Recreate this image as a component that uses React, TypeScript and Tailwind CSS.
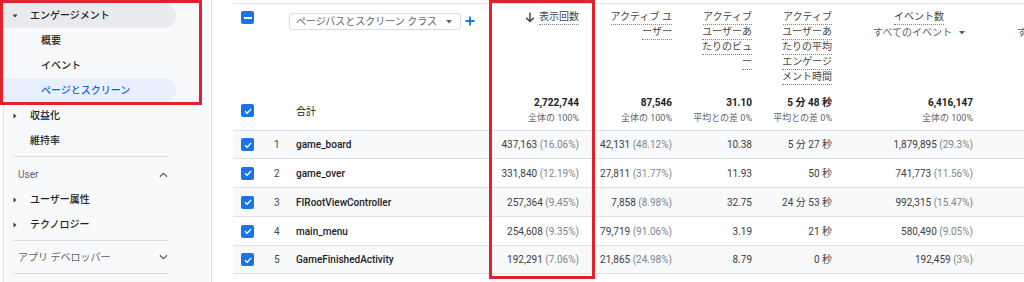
import React from "react";

const cols = "grid grid-cols-[31px_26px_199px_98px_93px_80px_80px_141px_60px]";

function Check({ mixed }: { mixed?: boolean }) {
  return (
    <span className="flex h-[13px] w-[13px] items-center justify-center rounded-[2px] bg-[#1a73e8]">
      {mixed ? (
        <span className="h-[2px] w-[8px] bg-white" />
      ) : (
        <svg viewBox="0 0 12 12" className="h-[10px] w-[10px]">
          <path d="M2.3 6.3 L4.9 8.7 L9.7 3.6" fill="none" stroke="white" strokeWidth="1.6" />
        </svg>
      )}
    </span>
  );
}

function Tri({ open }: { open?: boolean }) {
  return (
    <span className="flex w-[18px] items-center">
      <svg viewBox="0 0 6 6" className="h-[6px] w-[6px] fill-[#3c4043]">
        {open ? <path d="M0.5 1.5 L5.5 1.5 L3 4.5 Z" /> : <path d="M1.5 0.5 L4.5 3 L1.5 5.5 Z" />}
      </svg>
    </span>
  );
}

function Chevron({ up }: { up?: boolean }) {
  return (
    <svg viewBox="0 0 10 6" className="h-[6px] w-[9px]">
      <path d={up ? "M1 5 L5 1.2 L9 5" : "M1 1 L5 4.8 L9 1"} fill="none" stroke="#5f6368" strokeWidth="1.4" />
    </svg>
  );
}

function HeadLines({ lines }: { lines: string[] }) {
  return (
    <div className="flex flex-col items-end">
      {lines.map((l, i) => (
        <span key={i} className="whitespace-pre border-b border-dotted border-[#80868b] leading-[14px]">
          {l}
        </span>
      ))}
    </div>
  );
}

const totals = [
  { v: "2,722,744", s: "全体の 100%" },
  { v: "87,546", s: "全体の 100%" },
  { v: "31.10", s: "平均との差 0%" },
  { v: "5 分 48 秒", s: "平均との差 0%" },
];

const rows = [
  { n: "game_board", views: "437,163", vp: "16.06%", au: "42,131", ap: "48.12%", vpu: "10.38", t: "5 分 27 秒", ev: "1,879,895", ep: "29.3%", h: "h-[28px]" },
  { n: "game_over", views: "331,840", vp: "12.19%", au: "27,811", ap: "31.77%", vpu: "11.93", t: "50 秒", ev: "741,773", ep: "11.56%", h: "h-[29px]" },
  { n: "FIRootViewController", views: "257,364", vp: "9.45%", au: "7,858", ap: "8.98%", vpu: "32.75", t: "24 分 53 秒", ev: "992,315", ep: "15.47%", h: "h-[29px]" },
  { n: "main_menu", views: "254,608", vp: "9.35%", au: "79,719", ap: "91.06%", vpu: "3.19", t: "21 秒", ev: "580,490", ep: "9.05%", h: "h-[29px]" },
  { n: "GameFinishedActivity", views: "192,291", vp: "7.06%", au: "21,865", ap: "24.98%", vpu: "8.79", t: "0 秒", ev: "192,459", ep: "3%", h: "h-[28px]" },
];

function Sidebar() {
  return (
    <aside className="ml-[3px] w-[209px] shrink-0 border-x border-[#e3e3e3] bg-[#f8f9fa] pt-[3px] text-[10px] font-medium text-[#202124]">
      <div className="mr-[35px] flex h-[25px] items-center rounded-r-full bg-[#e8eaed] pl-[8px]">
        <Tri open />
        エンゲージメント
      </div>
      <div className="flex h-[25px] items-center pl-[37px]">概要</div>
      <div className="flex h-[25px] items-center pl-[37px]">イベント</div>
      <div className="mr-[35px] flex h-[25px] items-center rounded-r-full bg-[#e8f0fe] pl-[37px] text-[#1967d2]">
        ページとスクリーン
      </div>
      <div className="flex h-[25px] items-center pl-[8px]">
        <Tri />
        収益化
      </div>
      <div className="flex h-[25px] items-center pl-[26px]">維持率</div>
      <div className="mr-[43px] ml-[9px] mt-[3px] border-t border-[#dadce0]" />
      <div className="flex h-[30px] items-center justify-between pl-[14px] pr-[43px] pt-[5px] font-normal text-[#5f6368]">
        User
        <Chevron up />
      </div>
      <div className="flex h-[25px] items-center pl-[8px]">
        <Tri />
        ユーザー属性
      </div>
      <div className="flex h-[25px] items-center pl-[8px]">
        <Tri />
        テクノロジー
      </div>
      <div className="mr-[43px] ml-[9px] mt-[3px] border-t border-[#dadce0]" />
      <div className="flex h-[32px] items-center justify-between pl-[14px] pr-[43px] font-normal text-[#5f6368]">
        アプリ デベロッパー
        <Chevron />
      </div>
      <div className="mr-[43px] ml-[9px] border-t border-[#dadce0]" />
    </aside>
  );
}

function Table() {
  return (
    <div className="min-w-0 flex-1 overflow-hidden pl-[21px] pt-[3px] text-[10px] text-[#3c4043]">
      <div className="w-[808px] border-t border-[#e0e0e0]">
        {/* header */}
        <div className={`${cols} h-[88px] text-[#444746]`}>
          <div className="pl-[8px] pt-[7px]">
            <Check mixed />
          </div>
          <div />
          <div className="flex items-start gap-[3px] pt-[9px]">
            <div className="-ml-px flex h-[17px] w-[172px] items-center justify-between rounded-[3px] border border-[#dadce0] pl-[6px] pr-[8px] text-[#5f6368]">
              <span className="whitespace-pre">ページパスとスクリーン クラス</span>
              <svg viewBox="0 0 6 4" className="h-[4px] w-[6px] fill-[#5f6368]">
                <path d="M0 0 L6 0 L3 3.5 Z" />
              </svg>
            </div>
            <svg viewBox="0 0 12 12" className="mt-[2px] h-[12px] w-[12px]">
              <path d="M6 1.5 V10.5 M1.5 6 H10.5" stroke="#1a73e8" strokeWidth="1.8" />
            </svg>
          </div>
          <div className="flex justify-end gap-[4px] pr-[8px] pt-[6px]">
            <svg viewBox="0 0 10 11" className="mt-[2px] h-[11px] w-[10px]">
              <path d="M5 0.5 V9.5 M1.2 5.8 L5 9.6 L8.8 5.8" fill="none" stroke="#3c4043" strokeWidth="1.4" />
            </svg>
            <HeadLines lines={["表示回数"]} />
          </div>
          <div className="flex justify-end pr-[8px] pt-[6px]">
            <HeadLines lines={["アクティブ ユ", "ーザー"]} />
          </div>
          <div className="flex justify-end pr-[8px] pt-[6px]">
            <HeadLines lines={["アクティブ", "ユーザーあ", "たりのビュ", "ー"]} />
          </div>
          <div className="flex justify-end pr-[8px] pt-[6px]">
            <HeadLines lines={["アクティブ", "ユーザーあ", "たりの平均", "エンゲージ", "メント時間"]} />
          </div>
          <div className="flex justify-end pr-[16px] pt-[6px]">
            <div className="flex flex-col items-center">
              <span className="border-b border-dotted border-[#80868b] leading-[14px]">イベント数</span>
              <span className="flex items-center gap-[7px] leading-[15px] text-[#5f6368]">
                すべてのイベント
                <svg viewBox="0 0 6 4" className="h-[4px] w-[6px] fill-[#5f6368]">
                  <path d="M0 0 L6 0 L3 3.5 Z" />
                </svg>
              </span>
            </div>
          </div>
          <div className="pl-[36px] pt-[21px] leading-[15px] whitespace-nowrap text-[#5f6368]">すべてのイベント</div>
        </div>

        {/* totals */}
        <div className={`${cols} h-[39px] border-b border-[#e0e0e0]`}>
          <div className="pl-[8px] pt-[12px]">
            <Check />
          </div>
          <div />
          <div className="flex items-center pl-[6px] text-[#202124]">合計</div>
          {totals.map((t, i) => (
            <div key={i} className="flex flex-col items-end pr-[8px] pt-[4px]">
              <span className="font-bold leading-[14px] text-[#202124]">{t.v}</span>
              <span className="text-[9px] leading-[16px] text-[#5f6368]">{t.s}</span>
            </div>
          ))}
          <div className="flex flex-col items-end pr-[8px] pt-[4px]">
            <span className="font-bold leading-[14px] text-[#202124]">6,416,147</span>
            <span className="text-[9px] leading-[16px] text-[#5f6368]">全体の 100%</span>
          </div>
          <div />
        </div>

        {/* rows */}
        {rows.map((r, i) => (
          <div
            key={r.n}
            className={`${cols} ${r.h} items-center border-b border-[#e0e0e0] ${i % 2 === 0 ? "bg-[#f8f9fa]" : "bg-white"}`}
          >
            <div className="pl-[8px]">
              <Check />
            </div>
            <div className="pl-[10px] text-[#444746]">{i + 1}</div>
            <div className="pl-[6px] font-medium text-[#202124]">{r.n}</div>
            <div className="pr-[8px] text-right">
              {r.views} <span className="text-[#80868b]">({r.vp})</span>
            </div>
            <div className="pr-[8px] text-right">
              {r.au} <span className="text-[#80868b]">({r.ap})</span>
            </div>
            <div className="pr-[8px] text-right">{r.vpu}</div>
            <div className="pr-[8px] text-right">{r.t}</div>
            <div className="pr-[8px] text-right">
              {r.ev} <span className="text-[#80868b]">({r.ep})</span>
            </div>
            <div />
          </div>
        ))}
      </div>
    </div>
  );
}

export default function App() {
  return (
    <div className="relative flex h-[282px] w-[1024px] overflow-hidden bg-white font-['Roboto','Noto_Sans_CJK_JP',sans-serif]">
      <Sidebar />
      <Table />
      {/* highlight boxes */}
      <div className="pointer-events-none absolute left-0 top-0 h-[105px] w-[202px] border-[3px] border-[#e3212b]" />
      <div className="pointer-events-none absolute left-[489px] top-0 h-[279px] w-[106px] border-[3px] border-[#e3212b]" />
    </div>
  );
}
